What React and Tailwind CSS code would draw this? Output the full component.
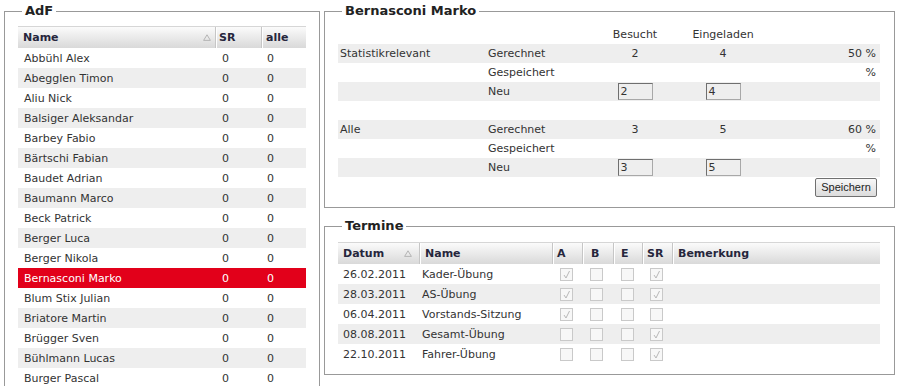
import React from 'react'

const members = [
    'Abbühl Alex', 'Abegglen Timon', 'Aliu Nick', 'Balsiger Aleksandar', 'Barbey Fabio',
    'Bärtschi Fabian', 'Baudet Adrian', 'Baumann Marco', 'Beck Patrick', 'Berger Luca',
    'Berger Nikola', 'Bernasconi Marko', 'Blum Stix Julian', 'Briatore Martin',
    'Brügger Sven', 'Bühlmann Lucas', 'Burger Pascal'
]

const termine = [
    { datum: '26.02.2011', name: 'Kader-Übung', a: true, b: false, e: false, sr: true },
    { datum: '28.03.2011', name: 'AS-Übung', a: true, b: false, e: false, sr: true },
    { datum: '06.04.2011', name: 'Vorstands-Sitzung', a: true, b: false, e: false, sr: false },
    { datum: '08.08.2011', name: 'Gesamt-Übung', a: false, b: false, e: false, sr: true },
    { datum: '22.10.2011', name: 'Fahrer-Übung', a: false, b: false, e: false, sr: true },
]

function SortArrow() {
    return (
        <svg width="8" height="7" viewBox="0 0 8 7" className="shrink-0">
            <polygon points="4,0.8 7.4,6.4 0.6,6.4" fill="none" stroke="#b4b4b4" strokeWidth="1" />
        </svg>
    )
}

function Check({ checked }) {
    return (
        <div className="w-[13px] h-[13px] border border-[#c9c9c9] bg-[#f7f7f7] flex items-center justify-center">
            {checked && (
                <svg width="11" height="11" viewBox="0 0 11 11">
                    <polyline points="3,6 5,9 8.5,2" fill="none" stroke="#b8b8b8" strokeWidth="1" />
                </svg>
            )}
        </div>
    )
}

function Box({ value }) {
    return (
        <div className="w-[35px] h-[17px] border border-t-[#6f6f6f] border-l-[#6f6f6f] border-r-[#a8a8a8] border-b-[#a8a8a8] bg-[#eeeeee] pl-[2px] flex items-center text-[#333]">
            {value}
        </div>
    )
}

const headDiv = 'border-l border-[#c6c6c6] shadow-[inset_1px_0_0_#ffffff]'

function StatBlock({ label, besucht, eingeladen, pct, neuB, neuE }) {
    return (
        <>
            <div className="flex h-[19px] items-center bg-[#eeeeee]">
                <div className="w-[148px] pl-[2px]">{label}</div>
                <div className="w-[114px] pl-[2px]">Gerechnet</div>
                <div className="w-[70px] text-center">{besucht}</div>
                <div className="w-[106px] text-center">{eingeladen}</div>
                <div className="flex-1 text-right pr-[4px]">{pct} %</div>
            </div>
            <div className="flex h-[19px] items-center">
                <div className="w-[148px]"></div>
                <div className="w-[114px] pl-[2px]">Gespeichert</div>
                <div className="w-[70px]"></div>
                <div className="w-[106px]"></div>
                <div className="flex-1 text-right pr-[4px]">%</div>
            </div>
            <div className="flex h-[19px] items-center bg-[#eeeeee]">
                <div className="w-[148px]"></div>
                <div className="w-[114px] pl-[2px]">Neu</div>
                <div className="w-[70px] flex justify-center"><Box value={neuB} /></div>
                <div className="w-[106px] flex justify-center"><Box value={neuE} /></div>
                <div className="flex-1"></div>
            </div>
        </>
    )
}

export default function App() {
    return (
        <div className="w-[901px] h-[386px] overflow-hidden bg-white font-['DejaVu_Sans',sans-serif] text-[11px] text-[#333] leading-none">
            <div className="flex pl-[4px] gap-[4px]">
                {/* AdF list */}
                <fieldset className="w-[316px] mt-[3px] border border-[#999] px-[13px] pt-[7px] pb-[10px] shrink-0">
                    <legend className="ml-[4px] px-[3px] font-bold text-[13px] leading-[16px] text-[#222]">AdF</legend>
                    <div className="w-[288px]">
                        <div className="flex h-[22px] border-t border-[#d6d6d6] bg-linear-to-b from-[#fbfbfb] to-[#d9d9d9] font-bold text-[#26263c]">
                            <div className="w-[197px] pl-[5px] pr-[4px] flex items-center justify-between">
                                <span>Name</span>
                                <SortArrow />
                            </div>
                            <div className={`w-[46px] pl-[3px] flex items-center ${headDiv}`}>SR</div>
                            <div className={`flex-1 pl-[4px] flex items-center ${headDiv}`}>alle</div>
                        </div>
                        {members.map((m, i) => {
                            const sel = m === 'Bernasconi Marko'
                            const bg = sel ? 'bg-[#e2001a] text-white' : i % 2 ? 'bg-[#eeeeee]' : 'bg-white'
                            return (
                                <div key={m} className={`flex h-[20px] items-center ${bg}`}>
                                    <div className="w-[197px] pl-[6px]">{m}</div>
                                    <div className="w-[46px] pl-[7px]">0</div>
                                    <div className="flex-1 pl-[6px]">0</div>
                                </div>
                            )
                        })}
                    </div>
                </fieldset>

                <div className="w-[571px] flex flex-col shrink-0">
                    {/* Statistik */}
                    <fieldset className="mt-[3px] border border-[#999] pl-[13px] pr-[14px] pt-[6px] pb-[10px]">
                        <legend className="ml-[4px] px-[3px] font-bold text-[13px] leading-[16px] text-[#222]">Bernasconi Marko</legend>
                        <div className="flex h-[19px] items-center">
                            <div className="w-[148px]"></div>
                            <div className="w-[114px]"></div>
                            <div className="w-[70px] text-center">Besucht</div>
                            <div className="w-[106px] text-center">Eingeladen</div>
                            <div className="flex-1"></div>
                        </div>
                        <StatBlock label="Statistikrelevant" besucht="2" eingeladen="4" pct="50" neuB="2" neuE="4" />
                        <div className="h-[19px]"></div>
                        <StatBlock label="Alle" besucht="3" eingeladen="5" pct="60" neuB="3" neuE="5" />
                        <div className="flex justify-end pr-[3px] mt-[1px]">
                            <button className="w-[62px] h-[19px] border border-[#707070] rounded-[2px] bg-linear-to-b from-[#f8f8f8] to-[#dcdcdc] font-['Liberation_Sans',sans-serif] text-[11px] text-[#222]">
                                Speichern
                            </button>
                        </div>
                    </fieldset>

                    {/* Termine */}
                    <fieldset className="mt-[10px] border border-[#999] pl-[13px] pr-[14px] pt-[8px] pb-[10px]">
                        <legend className="ml-[4px] px-[3px] font-bold text-[13px] leading-[16px] text-[#222]">Termine</legend>
                        <div className="flex h-[22px] border-t border-[#d6d6d6] bg-linear-to-b from-[#fbfbfb] to-[#d9d9d9] font-bold text-[#26263c]">
                            <div className="w-[81px] pl-[5px] pr-[7px] flex items-center justify-between">
                                <span>Datum</span>
                                <SortArrow />
                            </div>
                            <div className={`w-[133px] pl-[5px] flex items-center ${headDiv}`}>Name</div>
                            <div className={`w-[30px] pl-[4px] flex items-center ${headDiv}`}>A</div>
                            <div className={`w-[31px] pl-[8px] flex items-center ${headDiv}`}>B</div>
                            <div className={`w-[29px] pl-[7px] flex items-center ${headDiv}`}>E</div>
                            <div className={`w-[30px] pl-[4px] flex items-center ${headDiv}`}>SR</div>
                            <div className={`flex-1 pl-[5px] flex items-center ${headDiv}`}>Bemerkung</div>
                        </div>
                        {termine.map((t, i) => (
                            <div key={t.datum} className={`flex h-[20px] items-center ${i % 2 ? 'bg-[#eeeeee]' : 'bg-white'}`}>
                                <div className="w-[81px] pl-[5px]">{t.datum}</div>
                                <div className="w-[133px] pl-[3px]">{t.name}</div>
                                <div className="w-[30px] pl-[8px]"><Check checked={t.a} /></div>
                                <div className="w-[31px] pl-[8px]"><Check checked={t.b} /></div>
                                <div className="w-[29px] pl-[8px]"><Check checked={t.e} /></div>
                                <div className="w-[30px] pl-[8px]"><Check checked={t.sr} /></div>
                                <div className="flex-1"></div>
                            </div>
                        ))}
                    </fieldset>
                </div>
            </div>
        </div>
    )
}
